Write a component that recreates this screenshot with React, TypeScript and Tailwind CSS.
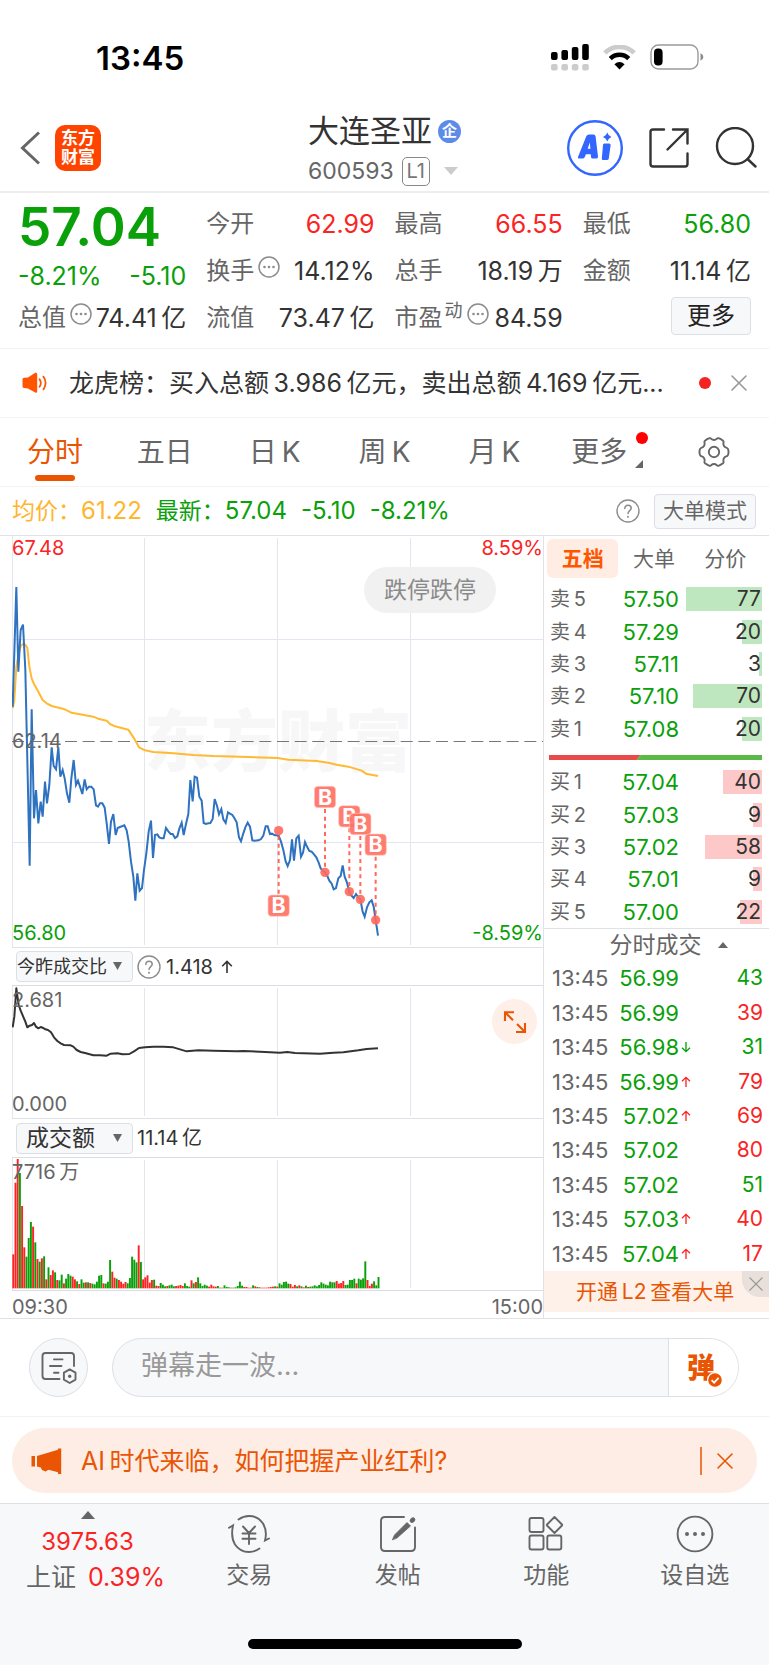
import React from "react";

const GREEN = "#0aa00a";
const RED = "#fb2424";

type Tone = "up" | "down" | "plain";
const tone: Record<Tone, string> = {
  up: "text-[#fb2424]",
  down: "text-[#0aa00a]",
  plain: "text-[#333333]",
};

/* ---------- chart data (three units per pixel) ---------- */

const pricePoints =
  "38,140 49,-219 55,35 62,-90 69,-106 76,30 82,300 89,617 95,148 102,475 108,390 115,490 122,425 128,470 135,365 141,430 148,375 155,262 161,318 168,328 175,262 181,350 188,330 194,355 201,400 208,428 214,355 221,300 228,375 234,362 240,380 247,402 254,358 260,388 267,380 274,380 281,388 288,436 294,440 300,430 307,430 314,443 320,490 327,552 333,485 340,462 347,525 353,504 360,501 373,496 380,511 386,545 393,605 400,650 406,722 412,640 419,692 426,684 432,630 439,580 446,515 453,482 459,594 465,525 472,523 478,532 485,535 491,535 498,504 505,514 512,522 518,522 525,534 532,529 538,506 545,488 551,525 558,492 565,462 571,360 578,424 584,350 591,353 598,410 605,422 611,489 618,492 625,490 631,489 638,477 644,417 651,437 657,463 664,447 670,478 677,489 684,457 690,461 697,465 703,474 710,487 717,532 723,544 730,520 736,502 743,488 750,500 757,541 763,542 776,541 783,537 790,527 797,499 803,499 810,522 816,521 823,525 836,527 843,545 850,570 857,604 863,618 870,600 876,538 882,602 889,535 896,527 903,590 909,578 915,546 922,562 928,573 935,575 942,583 949,592 956,608 962,625 969,632 975,637 982,648 988,662 995,671 1001,688 1008,684 1015,655 1022,648 1028,616 1034,650 1041,668 1048,697 1054,706 1061,714 1068,702 1075,712 1081,718 1088,755 1094,770 1101,742 1108,727 1115,721 1121,740 1127,780 1134,827";

const averagePoints =
  "38,145 43,120 49,20 56,-20 62,-42 69,-48 76,-46 82,-36 88,20 95,55 102,72 115,95 128,120 140,130 155,138 194,148 214,158 240,163 280,170 294,176 320,182 330,192 345,199 385,209 400,232 408,245 417,262 435,271 460,276 520,280 580,285 640,288 720,290 833,294 865,299 950,303 985,308 1010,314 1045,320 1085,332 1098,341 1134,348";

const ratioPoints =
  "38,262 43,230 49,145 56,195 62,212 76,245 82,262 89,257 96,255 102,249 108,260 115,265 122,261 130,264 136,268 144,270 153,277 162,292 172,303 182,310 192,315 212,316 220,320 230,330 242,336 258,340 280,346 300,346 320,347 332,341 352,340 368,343 388,342 402,334 417,324 435,322 460,320 490,320 520,322 540,328 560,334 595,331 640,332 710,334 730,333 780,335 840,338 862,336 885,339 960,341 1000,338 1030,337 1075,331 1100,327 1134,325";

const volumes =
  "r102 r317 r388 g346 r247 r123 g95 g151 g199 r185 g138 r88 g80 r90 g96 r27 g63 r40 r54 g48 r25 g24 g41 r15 g29 g43 g38 r35 r27 g21 r13 g27 g17 r18 g18 r16 g14 g12 g20 g38 g40 r15 g14 g20 g85 r50 r32 g29 r25 r20 r14 r19 g15 g31 g95 g86 g78 r129 g79 r27 r33 r39 r17 r25 g26 r8 r7 g16 g11 g6 r7 g9 g11 g6 r7 r8 r10 r7 g15 g7 g5 r24 g15 r19 g33 g15 g7 g11 g8 r5 r11 r6 r5 g7 g2 r2 g9 g4 g3 r2 g2 g3 g7 g20 g8 r4 r4 r2 r2 g9 r6 g4 r3 r2 r2 r2 r3 r4 r5 g6 r5 g15 g11 g19 g20 g14 r13 r5 r10 g6 r9 g6 r3 g8 r4 g5 g6 g9 g6 g10 g18 g14 g11 g9 g20 g18 g18 r22 r14 r16 r22 g10 g11 g25 g25 g29 r15 g29 g26 g30 g81 r25 r7 r14 g21 g9 g34"
    .split(" ")
    .map((v) => ({ up: v[0] === "r", size: Number(v.slice(1)) }));

const trades = [
  { x: 836, dot: 512, box: 737 },
  { x: 975, dot: 637, box: 411 },
  { x: 1048, dot: 695, box: 469 },
  { x: 1081, dot: 718, box: 492 },
  { x: 1127, dot: 780, box: 554 },
];

const sells = [
  ["卖\u20095", "57.50", 77],
  ["卖\u20094", "57.29", 20],
  ["卖\u20093", "57.11", 3],
  ["卖\u20092", "57.10", 70],
  ["卖\u20091", "57.08", 20],
] as const;

const buys = [
  ["买\u20091", "57.04", 40],
  ["买\u20092", "57.03", 9],
  ["买\u20093", "57.02", 58],
  ["买\u20094", "57.01", 9],
  ["买\u20095", "57.00", 22],
] as const;

const ticks = [
  { price: "56.99", move: "", qty: 43, side: "down" },
  { price: "56.99", move: "", qty: 39, side: "up" },
  { price: "56.98", move: "down", qty: 31, side: "down" },
  { price: "56.99", move: "up", qty: 79, side: "up" },
  { price: "57.02", move: "up", qty: 69, side: "up" },
  { price: "57.02", move: "", qty: 80, side: "up" },
  { price: "57.02", move: "", qty: 51, side: "down" },
  { price: "57.03", move: "up", qty: 40, side: "up" },
  { price: "57.04", move: "up", qty: 17, side: "up" },
] as const;

/* ---------- small icons ---------- */

function Close({ className }: { className: string }) {
  return (
    <svg viewBox="0 0 16 16" className={className} fill="none" stroke="currentColor" strokeLinecap="round">
      <path d="M1 1L15 15M15 1L1 15" strokeWidth="1.6" />
    </svg>
  );
}

function Question() {
  return (
    <svg viewBox="0 0 24 24" className="size-6 text-[#8c8c8c]" fill="none" stroke="currentColor" strokeLinecap="round">
      <circle cx="12" cy="12" r="11" strokeWidth="1.4" />
      <path d="M8.8 9.6C8.8 7.4 10.2 6.3 12 6.3S15.2 7.5 15.2 9.3C15.2 11.6 12 11.6 12 14.4" strokeWidth="1.5" />
      <circle cx="12" cy="17.7" r="1" fill="currentColor" stroke="none" />
    </svg>
  );
}

function Dots() {
  return (
    <svg viewBox="0 0 22 22" className="size-[22px] shrink-0 -translate-y-1 text-[#8c8c8c]" fill="currentColor">
      <circle cx="11" cy="11" r="10" fill="none" stroke="currentColor" strokeWidth="1.5" />
      <circle cx="6.5" cy="11" r="1.3" />
      <circle cx="11" cy="11" r="1.3" />
      <circle cx="15.5" cy="11" r="1.3" />
    </svg>
  );
}

function Arrow({ down, className }: { down?: boolean; className: string }) {
  return (
    <svg viewBox="0 0 12 14" className={className} fill="none" stroke="currentColor" strokeWidth="1.6">
      <path d={down ? "M6 1V12.5M1.2 7.8L6 12.6L10.8 7.8" : "M6 13V1.5M1.2 6.2L6 1.4L10.8 6.2"} />
    </svg>
  );
}

/* ---------- sections ---------- */

function StatusBar() {
  return (
    <div className="flex h-[104px] items-center justify-between pt-2.5 pr-[65px] pl-24">
      <span className="pt-0.5 text-[33px] leading-10 font-semibold text-black">13:45</span>
      <div className="flex items-center gap-3.5">
        <svg viewBox="0 0 38 28" className="h-7 w-[38px]">
          <g fill="#000">
            <rect x="0" y="9" width="6.6" height="8" rx="2" />
            <rect x="10.4" y="7" width="6.6" height="10" rx="2" />
            <rect x="20.8" y="4" width="6.6" height="13" rx="2" />
            <rect x="31.2" y="1" width="6.6" height="16" rx="2" />
          </g>
          <g fill="#cccccc">
            <rect x="0" y="21" width="6.6" height="6.4" rx="2" />
            <rect x="10.4" y="21" width="6.6" height="6.4" rx="2" />
            <rect x="20.8" y="21" width="6.6" height="6.4" rx="2" />
            <rect x="31.2" y="21" width="6.6" height="6.4" rx="2" />
          </g>
        </svg>
        <svg viewBox="0 0 33 25" className="h-[25px] w-[33px]" fill="none">
          <path d="M1.8 7.9A21 21 0 0 1 31.2 7.9" stroke="#cccccc" strokeWidth="4.6" />
          <path d="M7.3 13.6A13 13 0 0 1 25.7 13.6" stroke="#000" strokeWidth="4.4" />
          <path d="M16.5 24.4L11.4 19.2Q16.5 14.8 21.6 19.2Z" fill="#000" />
        </svg>
        <svg viewBox="0 0 54 26" className="h-[26px] w-[54px]">
          <rect x="1" y="1" width="47" height="24" rx="7.5" fill="none" stroke="#9a9a9a" strokeWidth="1.4" />
          <rect x="4" y="4.5" width="8.6" height="17" rx="4" fill="#000" />
          <path d="M50.5 9.2Q53.4 10.4 53.4 13T50.5 16.8Z" fill="#8c8c8c" />
        </svg>
      </div>
    </div>
  );
}

function Header() {
  return (
    <header className="grid h-[89px] grid-cols-[1fr_auto_1fr] items-center border-b-2 border-[#eeeeee] px-3">
      <div className="flex items-center gap-[15px] pl-2">
        <button aria-label="返回" className="text-[#666666]">
          <svg viewBox="0 0 20 34" className="h-[34px] w-5" fill="none" stroke="currentColor" strokeWidth="3">
            <path d="M19 1.5L2.5 17L19 32.5" />
          </svg>
        </button>
        <a
          href="#home"
          className="flex size-[46px] flex-col items-center justify-center rounded-[10px] bg-[#ff4400] text-[17px] leading-[19px] font-bold text-white"
        >
          <span>东方</span>
          <span>财富</span>
        </a>
      </div>
      <div className="flex flex-col pt-[5px]">
        <div className="flex items-center gap-1.5">
          <h1 className="text-[31px] leading-[42px] text-[#333333]">大连圣亚</h1>
          <span className="flex size-[23px] items-center justify-center rounded-full bg-[#5d8ce8] text-[15px] leading-5 font-bold text-white">
            企
          </span>
        </div>
        <div className="flex items-center gap-2">
          <span className="text-[23px] leading-[38px] text-[#666666]">600593</span>
          <span className="flex h-[29px] w-7 items-center justify-center rounded-[5px] border border-[#888888] text-xl leading-6 text-[#777777]">
            L1
          </span>
          <svg viewBox="0 0 14 8" className="ml-1.5 h-2 w-3.5" fill="#cccccc">
            <path d="M0 0H14L7 8Z" />
          </svg>
        </div>
      </div>
      <div className="flex items-center justify-end gap-[26px]">
        <button aria-label="Ai">
          <svg viewBox="0 0 56 56" className="size-14">
            <circle cx="28" cy="28" r="26.8" fill="none" stroke="#3366ff" strokeWidth="2.4" />
            <path
              fillRule="evenodd"
              fill="#3366ff"
              d="M11 37L19.4 16Q20.2 14.4 22 14.4H26.4Q28.4 14.4 28.6 16.4L31 36.6Q31.2 38.6 29.4 38.6H25.6Q24.2 38.6 24 37L23.8 34.2H18.9L17.8 37Q17.2 38.6 15.6 38.6H12Q10.4 38.6 11 37ZM20.7 28.8H23.4L22.8 22.4Z"
            />
            <path fill="#3366ff" d="M37.6 23.6H42.2Q43.9 23.6 43.6 25.2L41.8 38.4Q41.5 40 39.9 40H36.2Q34.5 40 34.8 38.4L36 25Q36.2 23.6 37.6 23.6Z" />
            <path fill="#3366ff" d="M40.3 12.4Q41.4 16 44.4 17Q41.4 18 40.3 21.6Q39.2 18 36 17Q39.2 16 40.3 12.4Z" />
          </svg>
        </button>
        <button aria-label="分享" className="text-[#333333]">
          <svg viewBox="0 0 40 40" className="size-10" fill="none" stroke="currentColor" strokeWidth="2.4" strokeLinecap="round">
            <path d="M15 1.5H4Q1.5 1.5 1.5 4V36Q1.5 38.5 4 38.5H36Q38.5 38.5 38.5 36V25.5M24 1.5H38.5V15.5M38 2L18.5 21.5" />
          </svg>
        </button>
        <button aria-label="搜索" className="text-[#333333]">
          <svg viewBox="0 0 42 42" className="size-[42px]" fill="none" stroke="currentColor" strokeWidth="2.4" strokeLinecap="round">
            <circle cx="20" cy="19" r="18" />
            <path d="M32.5 32L40.5 39.5" />
          </svg>
        </button>
      </div>
    </header>
  );
}

function Stat({
  label,
  value,
  t = "plain",
  info,
  sup,
}: {
  label: string;
  value: string;
  t?: Tone;
  info?: boolean;
  sup?: string;
}) {
  return (
    <div className="flex h-[47px] items-center text-2xl leading-8 whitespace-nowrap">
      <dt className="flex items-center gap-1 text-[#666666]">
        <span>
          {label}
          {sup ? <sup className="ml-0.5 text-[18px]">{sup}</sup> : null}
        </span>
        {info ? <Dots /> : null}
      </dt>
      <dd className={"ml-auto text-[25px] " + tone[t]}>{value}</dd>
    </div>
  );
}

function Quote() {
  return (
    <section className="grid h-[156px] grid-cols-4 gap-x-5 border-b border-[#f2f2f2] px-[18px] pt-[7px]">
      <div>
        <div className="text-[53px] leading-[54px] font-semibold text-[#0aa00a]">57.04</div>
        <div className="flex h-10 items-center justify-between pt-1.5 text-[25px] text-[#0aa00a]">
          <span>-8.21%</span>
          <span>-5.10</span>
        </div>
        <Stat label="总值" value={"74.41\u2009亿"} info />
      </div>
      <div>
        <Stat label="今开" value="62.99" t="up" />
        <Stat label="换手" value="14.12%" info />
        <Stat label="流值" value={"73.47\u2009亿"} />
      </div>
      <div>
        <Stat label="最高" value="66.55" t="up" />
        <Stat label="总手" value={"18.19\u2009万"} />
        <Stat label="市盈" value="84.59" sup="动" info />
      </div>
      <div>
        <Stat label="最低" value="56.80" t="down" />
        <Stat label="金额" value={"11.14\u2009亿"} />
        <div className="flex h-[43px] items-center justify-end">
          <button className="h-[38px] w-20 rounded-[4px] border border-[#dcdfe6] bg-[#f7f8fa] text-2xl leading-8 text-[#222222]">
            更多
          </button>
        </div>
      </div>
    </section>
  );
}

function Notice() {
  return (
    <section className="flex h-[69px] items-center border-b border-[#f4f4f4] pr-[22px] pl-[22px]">
      <svg viewBox="0 0 26 22" className="h-[22px] w-[26px] shrink-0 text-[#ff5500]" fill="currentColor">
        <path d="M0.5 7.5Q0.5 6 2 5.8L6 5.4L13.2 0.8Q15.2 0.2 15.2 2.2V19.2Q15.2 21.2 13.2 20.6L6 16.4L2 16Q0.5 15.8 0.5 14.3Z" />
        <path
          d="M17.6 7.2Q20 11 17.6 14.8M21.4 4.6Q25.8 11 21.4 17.4"
          fill="none"
          stroke="currentColor"
          strokeWidth="1.8"
          strokeLinecap="round"
        />
      </svg>
      <a href="#notice" className="ml-[21px] flex-1 truncate text-[25px] leading-9 text-[#333333]">
        龙虎榜：买入总额{"\u2009"}3.986{"\u2009"}亿元，卖出总额{"\u2009"}4.169{"\u2009"}亿元...
      </a>
      <span className="size-3 shrink-0 rounded-full bg-[#f52222]" />
      <button aria-label="关闭" className="ml-5 shrink-0 text-[#999999]">
        <Close className="size-4" />
      </button>
    </section>
  );
}

function Tabs() {
  const base = "flex h-full items-center justify-center text-[28px] leading-10 text-[#666666]";
  return (
    <nav className="grid h-[69px] grid-cols-7 border-b border-[#f2f2f2]">
      <button className="relative flex h-full items-center justify-center text-[28px] leading-10 text-[#ea5504]">
        分时
        <span className="absolute bottom-[5px] left-1/2 h-1.5 w-10 -translate-x-1/2 rounded-full bg-[#ea5504]" />
      </button>
      <button className={base}>五日</button>
      <button className={base}>日{"\u2009"}K</button>
      <button className={base}>周{"\u2009"}K</button>
      <button className={base}>月{"\u2009"}K</button>
      <button className={base + " pr-2.5"}>
        <span className="relative">
          更多
          <span className="absolute top-0 -right-[21px] size-3 rounded-full bg-[#ff0000]" />
          <svg viewBox="0 0 8 8" className="absolute right-[-16px] bottom-1 size-2" fill="#666666">
            <path d="M8 0V8H0Z" />
          </svg>
        </span>
      </button>
      <button aria-label="设置" className={base}>
        <svg viewBox="0 0 32 32" className="size-8" fill="none" stroke="currentColor" strokeWidth="1.9" strokeLinejoin="round">
          <path d="M11.5 2.2Q12.6 2 13.3 2.9Q14.4 4 16 4T18.7 2.9Q19.4 2 20.5 2.2Q23 3 25 4.7Q25.9 5.5 25.5 6.7Q25.1 8.2 25.9 9.7T28.2 11.6Q29.4 11.9 29.9 12.9Q31.2 16 29.9 19.1Q29.4 20.1 28.2 20.4Q26.7 20.8 25.9 22.3T25.5 25.3Q25.9 26.5 25 27.3Q23 29 20.5 29.8Q19.4 30 18.7 29.1Q17.6 28 16 28T13.3 29.1Q12.6 30 11.5 29.8Q9 29 7 27.3Q6.1 26.5 6.5 25.3Q6.9 23.8 6.1 22.3T3.8 20.4Q2.6 20.1 2.1 19.1Q0.8 16 2.1 12.9Q2.6 11.9 3.8 11.6Q5.3 11.2 6.1 9.7T6.5 6.7Q6.1 5.5 7 4.7Q9 3 11.5 2.2Z" />
          <circle cx="16" cy="16" r="5.2" />
        </svg>
      </button>
    </nav>
  );
}

function PriceLine() {
  return (
    <div className="flex h-12 items-center pr-[13px] pl-3 text-[23px] leading-8 whitespace-nowrap text-[#0aa00a]">
      <span className="text-[#ffb52e]">
        均价：<span className="text-2xl">61.22</span>
      </span>
      <span className="ml-3.5">
        最新：<span className="text-2xl">57.04</span>
      </span>
      <span className="ml-3.5 text-2xl">-5.10</span>
      <span className="ml-3.5 text-2xl">-8.21%</span>
      <button aria-label="说明" className="ml-auto">
        <Question />
      </button>
      <button className="ml-3.5 h-[35px] rounded-[4px] border border-[#dcdfe6] bg-[#f7f8fa] px-2 text-[21px] leading-7 text-[#666666]">
        大单模式
      </button>
    </div>
  );
}

function GridLines({ top, bottom }: { top: number; bottom: number }) {
  return (
    <g stroke="#e3e6ef" strokeWidth="3">
      <path d={`M37.5 ${top}V${bottom}M433.5 ${top + 6}V${bottom - 6}M832.5 ${top + 6}V${bottom - 6}M1231.5 ${top + 6}V${bottom - 6}`} />
    </g>
  );
}

function PriceChart() {
  return (
    <div className="relative border-b border-[#dfe1e6]">
      <span className="absolute top-[164px] left-[132px] text-[67px] leading-[84px] font-black whitespace-nowrap text-[#f7f7f7]">
        东方财富
      </span>
      <svg viewBox="36 -372 1593 1233" className="relative block w-full" fill="none">
        <GridLines top={-372} bottom={861} />
        <path d="M36 -61.5H1629M36 547.5H1629" stroke="#e3e6ef" strokeWidth="3" />
        <path d="M36 244.5H1629" stroke="#777777" strokeWidth="3" strokeDasharray="36 17" />
        <polyline points={averagePoints} stroke="#ffb933" strokeWidth="6" strokeLinejoin="round" />
        <polyline points={pricePoints} stroke="#2e72c0" strokeWidth="6" strokeLinejoin="miter" />
        {trades.map((t) => (
          <g key={t.x} opacity="0.9">
            <path
              d={t.box > t.dot ? `M${t.x} ${t.dot + 16}V${t.box - 34}` : `M${t.x} ${t.box + 36}V${t.dot - 12}`}
              stroke="#ff5a4d"
              strokeWidth="6"
              strokeDasharray="12 11"
            />
            <circle cx={t.x} cy={t.dot} r="14" fill="#ff6a5c" />
            <rect x={t.x - 32} y={t.box - 32} width="64" height="64" rx="11" fill="#ff6f61" stroke="#ffc9c2" strokeWidth="2" />
            <text x={t.x} y={t.box + 23} textAnchor="middle" fill="#ffffff" className="text-[64px] font-bold">
              B
            </text>
          </g>
        ))}
      </svg>
      <span className="absolute top-0 left-0 text-xl leading-6 text-[#fb2424]">67.48</span>
      <span className="absolute top-0 right-0 text-xl leading-6 text-[#fb2424]">8.59%</span>
      <span className="absolute top-[193px] left-0 text-xl leading-6 text-[#666666]">62.14</span>
      <span className="absolute bottom-0.5 left-0 text-xl leading-6 text-[#0aa00a]">56.80</span>
      <span className="absolute right-0 bottom-0.5 text-xl leading-6 text-[#0aa00a]">-8.59%</span>
      <span className="absolute top-[31px] right-[47px] rounded-full bg-[#f0f0f0]/90 px-5 py-[7px] text-[23px] leading-8 text-[#8a8a8a]">
        跌停跌停
      </span>
    </div>
  );
}

function IndicatorPicker({ label, small }: { label: string; small?: boolean }) {
  return (
    <span className="relative ml-1 block h-[31px] w-[117px]">
      <select
        aria-label={label}
        className={
          small
            ? "size-full appearance-none rounded-[4px] border border-[#dcdfe6] bg-[#f7f8fa] text-[18px] leading-6 text-[#333333]"
            : "size-full appearance-none rounded-[4px] border border-[#dcdfe6] bg-[#f7f8fa] pl-[9px] text-[23px] leading-6 text-[#333333]"
        }
      >
        <option>{label}</option>
      </select>
      <svg viewBox="0 0 9 8" className="pointer-events-none absolute top-[11px] right-[11px] h-2 w-[9px]" fill="#666666">
        <path d="M0 0H9L4.5 8Z" />
      </svg>
    </span>
  );
}

function Charts() {
  return (
    <div className="min-w-0 flex-1">
      <PriceChart />
      <div className="flex h-[38px] items-center border-b border-[#d9dce4] text-xl leading-6 text-[#333333]">
        <IndicatorPicker label="今昨成交比" small />
        <span className="ml-1">
          <Question />
        </span>
        <span className="ml-[5px]">1.418</span>
        <Arrow className="ml-2 h-3.5 w-3" />
      </div>
      <div className="relative border-b border-[#dfe1e6]">
        <svg viewBox="36 138 1593 396" className="block w-full" fill="none">
          <GridLines top={138} bottom={534} />
          <polyline points={ratioPoints} stroke="#333333" strokeWidth="6" strokeLinejoin="round" />
        </svg>
        <span className="absolute top-0.5 left-0 text-xl leading-6 text-[#666666]">2.681</span>
        <span className="absolute bottom-0.5 left-0 text-xl leading-6 text-[#666666]">0.000</span>
        <button
          aria-label="全屏"
          className="absolute top-[13px] right-1.5 flex size-[45px] items-center justify-center rounded-full bg-[#fef0e9] text-[#ea5504]"
        >
          <svg viewBox="0 0 24 24" className="size-6" fill="none" stroke="currentColor" strokeWidth="2.1">
            <path d="M2 11V2.2H11M2.5 2.7L10 10.2M13 22H22V13M21.5 21.5L14 14" />
          </svg>
        </button>
      </div>
      <div className="flex h-[39px] items-center border-b border-[#d9dce4] text-xl leading-6 text-[#333333]">
        <IndicatorPicker label="成交额" />
        <span className="ml-1">11.14{"\u2009"}亿</span>
      </div>
      <div className="relative border-b border-[#d9dce4]">
        <svg viewBox="36 654 1593 396" className="block w-full">
          <GridLines top={654} bottom={1050} />
          {volumes.map((v, i) => (
            <rect key={i} x={37 + i * 6.6} y={1045 - v.size} width="5.8" height={v.size} fill={v.up ? RED : GREEN} />
          ))}
        </svg>
        <span className="absolute top-0.5 left-0 text-xl leading-6 text-[#666666]">7716{"\u2009"}万</span>
      </div>
      <div className="flex h-[27px] items-center justify-between pt-1 text-xl leading-6 text-[#666666]">
        <span>09:30</span>
        <span>15:00</span>
      </div>
    </div>
  );
}

function Book({
  rows,
  fill,
}: {
  rows: readonly (readonly [string, string, number])[];
  fill: string;
}) {
  return (
    <table className="h-[162px] w-full table-fixed border-collapse text-[22px] leading-6">
      <tbody>
        {rows.map(([label, price, qty]) => (
          <tr key={label}>
            <th className="w-[52px] p-0 pl-1.5 text-left text-xl font-normal whitespace-nowrap text-[#666666]">{label}</th>
            <td className="p-0 text-right text-[#0aa00a]">{price}</td>
            <td className="w-[90px] p-0 pr-[7px] pl-[7px]">
              <div className="relative text-right text-[21px] text-[#333333]">
                <span className={"absolute inset-y-0 right-0 " + fill} style={{ width: `${(qty / 77) * 100}%` }} />
                <span className="relative mr-px">{qty}</span>
              </div>
            </td>
          </tr>
        ))}
      </tbody>
    </table>
  );
}

function SidePanel() {
  return (
    <aside className="w-[226px] shrink-0 border-l border-[#e0e2e8]">
      <div className="grid h-[47px] grid-cols-3 pt-[3px] pr-2 pl-[3px] text-[21px] leading-[39px] text-[#666666]">
        <button className="h-[39px] rounded-md bg-[#ffece2] font-bold text-[#ff5500]">五档</button>
        <button className="h-[39px]">大单</button>
        <button className="h-[39px]">分价</button>
      </div>
      <Book rows={sells} fill="bg-[#bfe7bf]" />
      <div className="h-[21px] pt-2.5 pr-[7px] pl-[5px]">
        <svg viewBox="0 0 214 5" preserveAspectRatio="none" className="block h-[5px] w-full">
          <path d="M0 0H92L88 5H0Z" fill="#e84a4a" />
          <path d="M92 0H214V5H88Z" fill="#5bb946" />
        </svg>
      </div>
      <Book rows={buys} fill="bg-[#fcc8c8]" />
      <button className="flex h-[33px] w-full items-center justify-center gap-4 border-t border-[#dfe1e8] pl-6 text-[23px] leading-8 text-[#666666]">
        分时成交
        <svg viewBox="0 0 10 6" className="h-1.5 w-2.5" fill="#666666">
          <path d="M5 0L10 6H0Z" />
        </svg>
      </button>
      <table className="h-[310px] w-full table-fixed border-collapse text-[22px] leading-6">
        <tbody>
          {ticks.map((t, i) => (
            <tr key={i}>
              <td className="w-[66px] p-0 pl-2 text-[#666666]">13:45</td>
              <td className="p-0 text-right text-[#0aa00a]">{t.price}</td>
              <td className="w-[90px] p-0 pr-1.5 pl-0.5">
                <div className="flex items-center">
                  {t.move ? (
                    <Arrow
                      down={t.move === "down"}
                      className={t.move === "down" ? "h-3 w-2.5 text-[#0aa00a]" : "h-3 w-2.5 text-[#fb2424]"}
                    />
                  ) : null}
                  <span className={"ml-auto text-[21px] " + tone[t.side]}>{t.qty}</span>
                </div>
              </td>
            </tr>
          ))}
        </tbody>
      </table>
      <div className="relative flex h-[41px] items-center bg-[#fef1ea] pl-8">
        <a href="#l2" className="text-[21px] leading-7 whitespace-nowrap text-[#ea5504]">
          开通{"\u2009"}L2{"\u2009"}查看大单
        </a>
        <button
          aria-label="关闭"
          className="absolute top-0 right-0 flex h-[26px] w-[27px] items-center justify-center rounded-bl-[18px] bg-[#e9dfdb] text-[#999999]"
        >
          <Close className="size-3.5" />
        </button>
      </div>
    </aside>
  );
}

function Comment() {
  return (
    <form className="flex h-[98px] items-center gap-6 border-b border-[#f2f2f2] pr-[30px] pl-[29px]" onSubmit={(e) => e.preventDefault()}>
      <button
        type="button"
        aria-label="弹幕设置"
        className="flex size-[59px] shrink-0 items-center justify-center rounded-full border border-[#dcdfe6] bg-[#f7f8fa] text-[#666666]"
      >
        <svg viewBox="0 0 36 34" className="h-[34px] w-9" fill="none" stroke="currentColor" strokeWidth="1.9" strokeLinecap="round">
          <path d="M18.5 28H4.5Q1.5 28 1.5 25V5Q1.5 2 4.5 2H30Q33 2 33 5V15" />
          <path d="M13 8.4H21.5M9 15H20.5M13 21.8H17.5" />
          <path d="M28.7 18.4L34.5 21.7V28.6L28.7 32L22.9 28.6V21.7Z" strokeLinejoin="round" />
          <circle cx="28.7" cy="25.2" r="1.7" fill="currentColor" stroke="none" />
        </svg>
      </button>
      <div className="flex h-[59px] flex-1 overflow-hidden rounded-full border border-[#dcdfe6] bg-[#f7f8fa]">
        <input
          aria-label="弹幕"
          placeholder="弹幕走一波..."
          className="min-w-0 flex-1 bg-transparent pb-1 pl-7 text-[27px] leading-9 text-[#333333] outline-none placeholder:text-[#999999]"
        />
        <button
          aria-label="发送弹幕"
          className="flex w-[70px] shrink-0 items-center border-l border-[#dcdfe6] bg-white pl-[18px] text-[#ea5504]"
        >
          <span className="relative text-[28px] leading-8 font-black">
            弹
            <svg viewBox="0 0 16 16" className="absolute -right-2 -bottom-1 size-4">
              <circle cx="8" cy="8" r="7.4" fill="#ea5504" stroke="#ffffff" strokeWidth="1.2" />
              <path d="M4.6 8.2L7.1 10.7L11.6 5.9" fill="none" stroke="#ffffff" strokeWidth="1.7" />
            </svg>
          </span>
        </button>
      </div>
    </form>
  );
}

function Banner() {
  return (
    <div className="px-3 pt-[11px] pb-2.5">
      <div className="flex h-[65px] items-center rounded-full bg-[#feede4] pr-6 pl-[19px] text-[#ea5504]">
        <svg viewBox="0 0 31 26" className="h-[26px] w-[31px] shrink-0" fill="currentColor">
          <path d="M0.5 8H4V18.5H0.5ZM6 8L27 1.8V0.5H30.2V26H27V24.3L17.5 21.8L14.5 23.4L11 22L9.8 19.6L6 18.6Z" />
        </svg>
        <a href="#ai" className="ml-[19px] text-[25px] leading-8">
          AI{"\u2009"}时代来临，如何把握产业红利?
        </a>
        <span className="ml-auto h-7 w-0.5 bg-[#f07a3c]" />
        <button aria-label="关闭" className="ml-[15px]">
          <Close className="size-4" />
        </button>
      </div>
    </div>
  );
}

function NavItem({ label, children }: { label: string; children: React.ReactNode }) {
  return (
    <a href="#nav" className="flex flex-1 flex-col items-center gap-1 pt-[9px] text-[23px] leading-8 text-[#666666]">
      <svg viewBox="0 0 42 42" className="size-[42px]" fill="none" stroke="currentColor" strokeWidth="1.9" strokeLinecap="round">
        {children}
      </svg>
      {label}
    </a>
  );
}

function BottomNav() {
  return (
    <footer className="border-t border-[#dcdfe4] bg-[#f7f8fa]">
      <nav className="flex h-[135px]">
        <a href="#index" className="flex w-[175px] flex-col items-center pt-[7px] text-2xl text-[#666666]">
          <svg viewBox="0 0 14 8" className="h-2 w-3.5" fill="currentColor">
            <path d="M7 0L14 8H0Z" />
          </svg>
          <span className="mt-1 leading-[38px] text-[#fb2424]">3975.63</span>
          <span className="flex gap-3 pl-4 text-[25px] leading-8 whitespace-nowrap">
            <span>上证</span>
            <span className="text-[#fb2424]">0.39%</span>
          </span>
        </a>
        <NavItem label="交易">
          <path d="M10.5 6.5Q15.5 3 21 3Q30 3 35 10.5Q39.5 18 37 27.5L41 25.5M31.5 35.5Q26.5 39 21 39Q12 39 7 31.5Q2.5 24 5 12.5L1 14.8" />
          <path d="M15 13.5L21 20L27 13.5M14.5 20.5H27.5M14.5 25.8H27.5M21 20V31" />
        </NavItem>
        <NavItem label="发帖">
          <path d="M27 4H8Q4 4 4 8V34Q4 38 8 38H34Q38 38 38 34V14.5" />
          <path d="M15.5 26.5L17.5 22L30 9.5L33.5 13L20 25Z" fill="currentColor" strokeWidth="0.8" />
          <path d="M35 7.6L36 6.6" strokeWidth="4.6" />
        </NavItem>
        <NavItem label="功能">
          <rect x="4.5" y="5" width="14" height="14" rx="2" />
          <rect x="4.5" y="22.5" width="14" height="14" rx="2" />
          <rect x="22.3" y="22.5" width="14" height="14" rx="2" />
          <path d="M29.5 4L37 11.5Q37.4 12 37 12.5L29.5 20L22 12.5Q21.6 12 22 11.5Z" strokeLinejoin="round" />
        </NavItem>
        <NavItem label="设自选">
          <circle cx="21" cy="21" r="17.4" />
          <g fill="currentColor" stroke="none">
            <circle cx="13" cy="21" r="2" />
            <circle cx="21" cy="21" r="2" />
            <circle cx="29" cy="21" r="2" />
          </g>
        </NavItem>
      </nav>
      <div className="flex justify-center pb-4">
        <span className="h-2.5 w-[274px] rounded-full bg-black" />
      </div>
    </footer>
  );
}

export default function App() {
  return (
    <div className="w-full bg-white font-['Inter','Noto_Sans_CJK_SC',sans-serif]">
      <StatusBar />
      <Header />
      <Quote />
      <Notice />
      <Tabs />
      <PriceLine />
      <main className="flex border-y border-[#e0e2e8] pl-3">
        <Charts />
        <SidePanel />
      </main>
      <Comment />
      <Banner />
      <BottomNav />
    </div>
  );
}
